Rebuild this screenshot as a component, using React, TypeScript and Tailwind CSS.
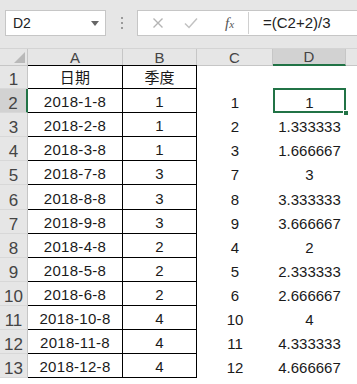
const rows = [
  { a: "日期", b: "季度", c: "", d: "" },
  { a: "2018-1-8", b: "1", c: "1", d: "1" },
  { a: "2018-2-8", b: "1", c: "2", d: "1.333333" },
  { a: "2018-3-8", b: "1", c: "3", d: "1.666667" },
  { a: "2018-7-8", b: "3", c: "7", d: "3" },
  { a: "2018-8-8", b: "3", c: "8", d: "3.333333" },
  { a: "2018-9-8", b: "3", c: "9", d: "3.666667" },
  { a: "2018-4-8", b: "2", c: "4", d: "2" },
  { a: "2018-5-8", b: "2", c: "5", d: "2.333333" },
  { a: "2018-6-8", b: "2", c: "6", d: "2.666667" },
  { a: "2018-10-8", b: "4", c: "10", d: "4" },
  { a: "2018-11-8", b: "4", c: "11", d: "4.333333" },
  { a: "2018-12-8", b: "4", c: "12", d: "4.666667" },
];

const font = "font-['Liberation_Sans','Noto_Sans_CJK_SC',sans-serif]";

function FormulaBar() {
  return (
    <div className="h-[48px] bg-[#e6e6e6] flex items-start pt-[10px] pl-[5px]">
      {/* Name box */}
      <div className="w-[101px] h-[26px] bg-white border border-[#c6c6c6] flex items-center pl-[7px] pr-[6px]">
        <span className="text-[14px] text-[#222] flex-1">D2</span>
        <svg width="8" height="5" viewBox="0 0 8 5">
          <path d="M0 0h8L4 5z" fill="#666" />
        </svg>
      </div>
      {/* grip dots */}
      <div className="w-[31px] h-[26px] flex flex-col items-center justify-center gap-[3px]">
        <div className="w-[2px] h-[2px] bg-[#9a9a9a]" />
        <div className="w-[2px] h-[2px] bg-[#9a9a9a]" />
        <div className="w-[2px] h-[2px] bg-[#9a9a9a]" />
      </div>
      {/* Formula input */}
      <div className="flex-1 h-[26px] bg-white border border-[#c6c6c6] border-r-0 flex items-center">
        <div className="w-[110px] h-full flex items-center">
          <svg width="12" height="12" viewBox="0 0 12 12" className="ml-[14px]">
            <path d="M1.5 1.5l9 9M10.5 1.5l-9 9" stroke="#b4b4b4" strokeWidth="1.4" />
          </svg>
          <svg width="14" height="12" viewBox="0 0 14 12" className="ml-[20px]">
            <path d="M1 6.5l4 4L13 1.5" stroke="#c2c2c2" strokeWidth="1.5" fill="none" />
          </svg>
          <span className="ml-[27px] text-[15px] italic text-[#555] font-['Liberation_Serif',serif]">
            f<span className="text-[11px]">x</span>
          </span>
        </div>
        <div className="w-px h-[22px] bg-[#d0d0d0]" />
        <span className="ml-[14px] text-[15px] text-[#222]">=(C2+2)/3</span>
      </div>
    </div>
  );
}

function HeaderRow() {
  const cols = [
    { l: "A", sel: false },
    { l: "B", sel: false },
    { l: "C", sel: false },
    { l: "D", sel: true },
  ];
  return (
    <div className="grid grid-cols-[28px_95px_74px_76px_73px_1fr] h-[17px] border-t border-[#d4d4d4]">
      <div className="bg-[#e6e6e6] border-r border-b border-[#c6c6c6] relative">
        <svg width="11" height="11" viewBox="0 0 11 11" className="absolute right-[2px] bottom-[2px]">
          <path d="M11 0V11H0z" fill="#b9b9b9" />
        </svg>
      </div>
      {cols.map((c) => (
        <div
          key={c.l}
          className={
            c.sel
              ? "bg-[#d2d2d2] border-r border-[#c6c6c6] border-b-2 border-b-[#217346] flex items-center justify-center text-[15px] text-[#444] leading-none"
              : "bg-[#e6e6e6] border-r border-b border-[#c6c6c6] flex items-center justify-center text-[15px] text-[#444] leading-none"
          }
        >
          {c.l}
        </div>
      ))}
      <div className="bg-[#e6e6e6] border-b border-[#c6c6c6]" />
    </div>
  );
}

export default function App() {
  return (
    <div className={`w-[357px] h-[384px] bg-white overflow-hidden ${font}`}>
      <FormulaBar />
      <HeaderRow />
      {rows.map((r, i) => {
        const n = i + 1;
        const sel = n === 2;
        return (
          <div key={n} className="grid grid-cols-[28px_95px_74px_76px_73px_1fr] h-[24.1px]">
            <div
              className={
                sel
                  ? "bg-[#d2d2d2] border-b border-[#d8d8d8] border-r-2 border-r-[#217346] flex items-end justify-center text-[17px] text-[#444] leading-none pb-0"
                  : "bg-[#e6e6e6] border-b border-[#d8d8d8] border-r border-r-[#c6c6c6] flex items-end justify-center text-[17px] text-[#444] leading-none pb-0"
              }
            >
              {n}
            </div>
            <div className={`border-r border-b border-black ${n === 1 ? "border-t" : ""} flex items-end justify-center text-[15px] text-[#1a1a1a] leading-none pb-[3px] tracking-[0.3px]`}>
              {r.a}
            </div>
            <div className={`border-r border-b border-black ${n === 1 ? "border-t" : ""} flex items-end justify-center text-[15px] text-[#1a1a1a] leading-none pb-[3px]`}>
              {r.b}
            </div>
            <div className="flex items-end justify-center text-[15px] text-[#1a1a1a] leading-none pb-[3px]">
              {r.c}
            </div>
            <div className="relative flex items-end justify-center text-[15px] text-[#1a1a1a] leading-none pb-[3px]">
              {r.d}
              {sel && (
                <>
                  <div className="absolute inset-0 -top-px border-2 border-[#217346]" />
                  <div className="absolute -right-[3px] -bottom-[3px] w-[6px] h-[6px] bg-[#217346] border border-white" />
                </>
              )}
            </div>
            <div />
          </div>
        );
      })}
    </div>
  );
}
